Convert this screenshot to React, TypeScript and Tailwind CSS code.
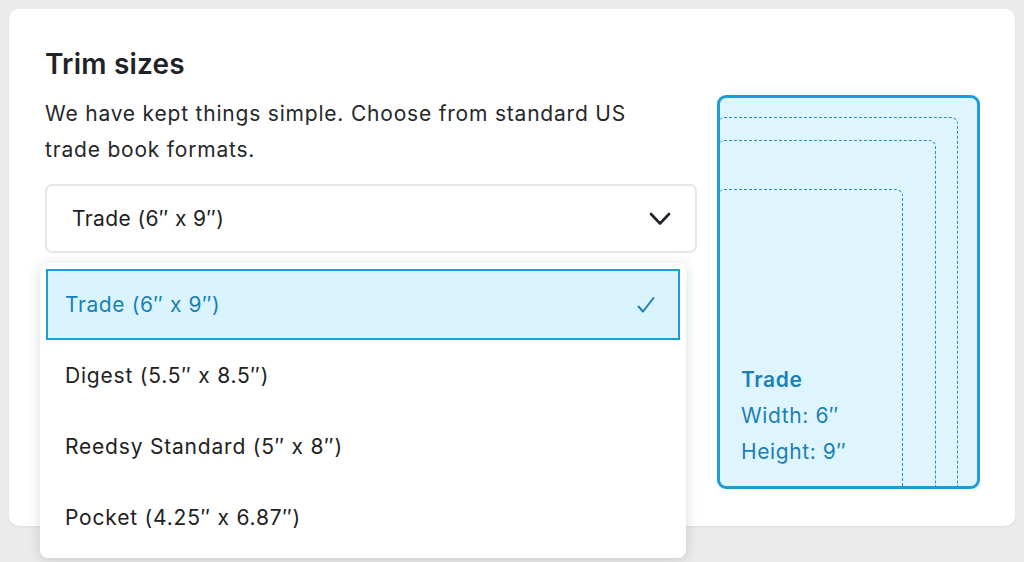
import { useState } from 'react';

interface TrimSize {
  id: string;
  label: string;
  name: string;
  width: string;
  height: string;
}

const trimSizes: TrimSize[] = [
  { id: 'trade', label: 'Trade (6″ x 9″)', name: 'Trade', width: '6″', height: '9″' },
  { id: 'digest', label: 'Digest (5.5″ x 8.5″)', name: 'Digest', width: '5.5″', height: '8.5″' },
  { id: 'reedsy', label: 'Reedsy Standard (5″ x 8″)', name: 'Reedsy Standard', width: '5″', height: '8″' },
  { id: 'pocket', label: 'Pocket (4.25″ x 6.87″)', name: 'Pocket', width: '4.25″', height: '6.87″' },
];

function ChevronDown() {
  return (
    <svg width="22" height="14" viewBox="0 0 22 14" fill="none" aria-hidden="true">
      <path d="M2 2l9 9.5L20 2" stroke="#1f2328" strokeWidth="2.6" strokeLinecap="round" strokeLinejoin="round" />
    </svg>
  );
}

function CheckMark() {
  return (
    <svg width="20" height="18" viewBox="0 0 20 18" fill="none" aria-hidden="true">
      <path d="M2.5 10.5l4.5 5L17.5 2" stroke="#1b80b8" strokeWidth="2" strokeLinecap="round" strokeLinejoin="round" />
    </svg>
  );
}

function BookPreview({ size }: { size: TrimSize }) {
  return (
    <div className="relative mt-[51px] flex h-[394px] w-[263px] flex-col justify-end overflow-hidden rounded-[9px] border-[3px] border-[#1a9dd8] bg-[#dff5fd] pb-[16px] pl-[21px]">
      {/* nested trim outlines, largest to smallest */}
      <div className="absolute bottom-0 left-0 top-[19px] w-[238px] rounded-tr-[7px] rounded-tl-[4px] border-r-[1.5px] border-t-[1.5px] border-dashed border-[#2a8dc2]" />
      <div className="absolute bottom-0 left-0 top-[42px] w-[216px] rounded-tr-[7px] rounded-tl-[4px] border-r-[1.5px] border-t-[1.5px] border-dashed border-[#2a8dc2]" />
      <div className="absolute bottom-0 left-0 top-[91px] w-[183px] rounded-tr-[7px] rounded-tl-[4px] border-r-[1.5px] border-t-[1.5px] border-dashed border-[#2a8dc2]" />
      <div className="relative text-[21px] leading-[36px] tracking-[0.6px] text-[#1b7fb7]">
        <p className="font-semibold">{size.name}</p>
        <p>Width: {size.width}</p>
        <p>Height: {size.height}</p>
      </div>
    </div>
  );
}

export default function App() {
  const [selectedId, setSelectedId] = useState('trade');
  const [open, setOpen] = useState(true);
  const selected = trimSizes.find((size) => size.id === selectedId) ?? trimSizes[0];

  return (
    <div className="h-[562px] w-[1024px] overflow-hidden bg-[#ebebeb] pl-[9px] pt-[9px] font-['Inter','Noto_Sans',sans-serif]">
      <div className="flex h-[517px] w-[1006px] gap-[20px] rounded-[10px] bg-white pl-[36px] pt-[35px] shadow-[0_1px_3px_rgba(0,0,0,0.06)]">
        <div className="w-[652px]">
          <h2 className="text-[28px] font-semibold leading-[40px] tracking-[0.2px] text-[#1f2328]">Trim sizes</h2>
          <p className="mt-[12px] max-w-[620px] text-[21px] leading-[36px] tracking-[0.8px] text-[#25282b]">
            We have kept things simple. Choose from standard US trade book formats.
          </p>
          <div className="relative mt-[16px]">
            <button
              type="button"
              onClick={() => setOpen(!open)}
              className="flex h-[69px] w-full items-center justify-between rounded-[7px] border-2 border-[#e6e6e6] bg-white pl-[25px] pr-[24px] text-left text-[21px] tracking-[0.4px] text-[#222]"
            >
              <span>{selected.label}</span>
              <ChevronDown />
            </button>
            {open ? (
              <ul className="absolute left-[-5px] top-[79px] z-10 w-[646px] rounded-[8px] bg-white px-[6px] pb-[5px] pt-[6px] shadow-[0_2px_14px_rgba(0,0,0,0.14)]">
                {trimSizes.map((size) => {
                  const isSelected = size.id === selectedId;
                  return (
                    <li key={size.id}>
                      <button
                        type="button"
                        onClick={() => setSelectedId(size.id)}
                        className={
                          isSelected
                            ? 'flex h-[71px] w-full items-center justify-between border-2 border-[#1a9dd8] bg-[#d9f4fd] pl-[17px] pr-[22px] text-left text-[21px] tracking-[0.6px] text-[#1b80b8]'
                            : 'flex h-[71px] w-full items-center justify-between border-2 border-transparent pl-[17px] pr-[22px] text-left text-[21px] tracking-[0.8px] text-[#222]'
                        }
                      >
                        <span>{size.label}</span>
                        {isSelected ? <CheckMark /> : null}
                      </button>
                    </li>
                  );
                })}
              </ul>
            ) : null}
          </div>
        </div>
        <BookPreview size={selected} />
      </div>
    </div>
  );
}
